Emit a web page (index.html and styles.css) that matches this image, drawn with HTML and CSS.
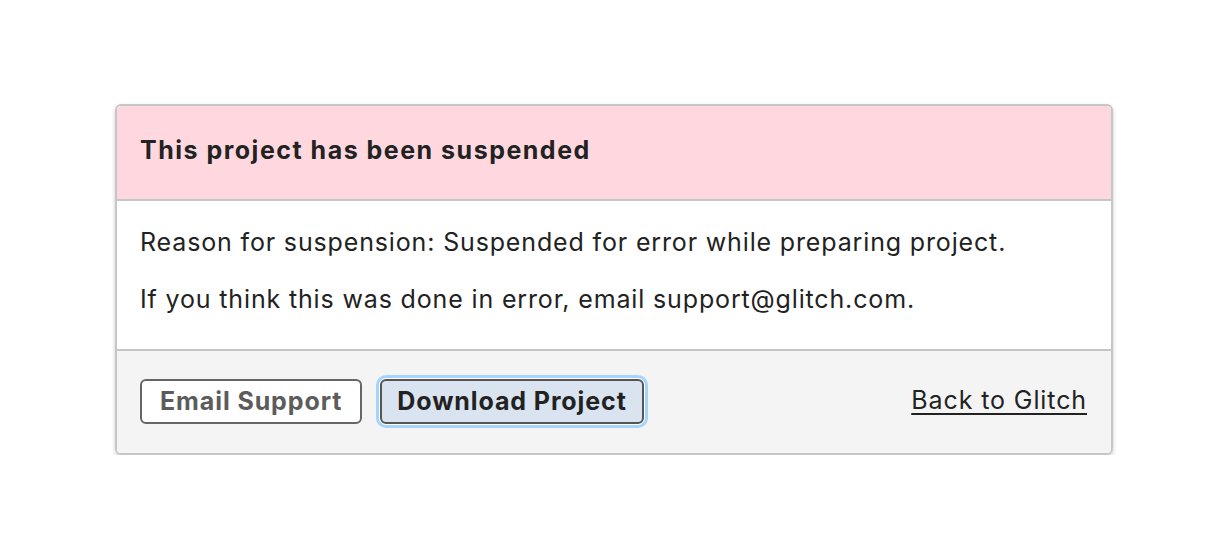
FILE: index.html
```html
<!DOCTYPE html>
<html lang="en">
<head>
    <meta charset="UTF-8">
    <meta name="viewport" content="width=device-width, initial-scale=1.0">
    <title>Project Suspended</title>
    <link rel="stylesheet" href="styles.css">
</head>
<body>
    <div class="page">
        <div class="notice">
            <div class="notice-header">
                <h1>This project has been suspended</h1>
            </div>

            <div class="notice-body">
                <p>Reason for suspension: Suspended for error while preparing project.</p>
                <p>If you think this was done in error, email support@glitch.com.</p>
            </div>

            <div class="notice-footer">
                <div class="actions">
                    <a class="btn" href="#">Email Support</a>
                    <button class="btn btn-focus">Download Project</button>
                </div>
                <a class="back-link" href="#">Back to Glitch</a>
            </div>
        </div>
    </div>
</body>
</html>
```

FILE: styles.css
```css
:root {
    --text: #222222;
    --border: #c6c6c6;
    --alert: #ffd8df;
    --footer: #f4f4f4;
}

* {
    margin: 0;
    padding: 0;
    box-sizing: border-box;
}

body {
    font-family: 'Inter', 'Liberation Sans', sans-serif;
    color: var(--text);
    background: white;
}

.page {
    padding: 104px 0 0 115px;
}

.notice {
    width: 998px;
    border: 2px solid var(--border);
    border-radius: 6px;
    box-shadow: 0 2px 4px rgba(0,0,0,0.2);
    overflow: hidden;
}

.notice-header {
    background: var(--alert);
    height: 95px;
    padding: 0 23px 5px;
    display: flex;
    align-items: center;
    border-bottom: 2px solid var(--border);
}

.notice-header h1 {
    font-size: 25px;
    font-weight: 700;
    letter-spacing: 1.5px;
}

.notice-body {
    background: white;
    padding: 26px 23px 20px;
    border-bottom: 2px solid var(--border);
    height: 150px;
}

.notice-body p {
    font-size: 25px;
    line-height: 30px;
    letter-spacing: 0.85px;
    margin-bottom: 27px;
}

.notice-footer {
    background: var(--footer);
    height: 102px;
    padding: 0 24px 0 23px;
    display: flex;
    align-items: center;
    justify-content: space-between;
}

.actions {
    display: flex;
    gap: 18px;
    margin-top: -2px;
}

.btn {
    font-family: inherit;
    font-size: 25px;
    font-weight: 700;
    letter-spacing: 0.9px;
    color: #5c5c5c;
    background: white;
    border: 2px solid #666666;
    border-radius: 6px;
    height: 45px;
    padding: 0 18px;
    display: flex;
    align-items: center;
    text-decoration: none;
    cursor: pointer;
}

.btn-focus {
    padding: 0 15px;
    color: var(--text);
    background: #d9e4f0;
    border-color: #555555;
    box-shadow: 0 0 0 1px white, 0 0 0 4px #a3d5ff;
}

.back-link {
    font-size: 25px;
    letter-spacing: 0.9px;
    color: var(--text);
    text-decoration: underline;
    text-underline-offset: 4px;
    margin-bottom: 4px;
}
```
